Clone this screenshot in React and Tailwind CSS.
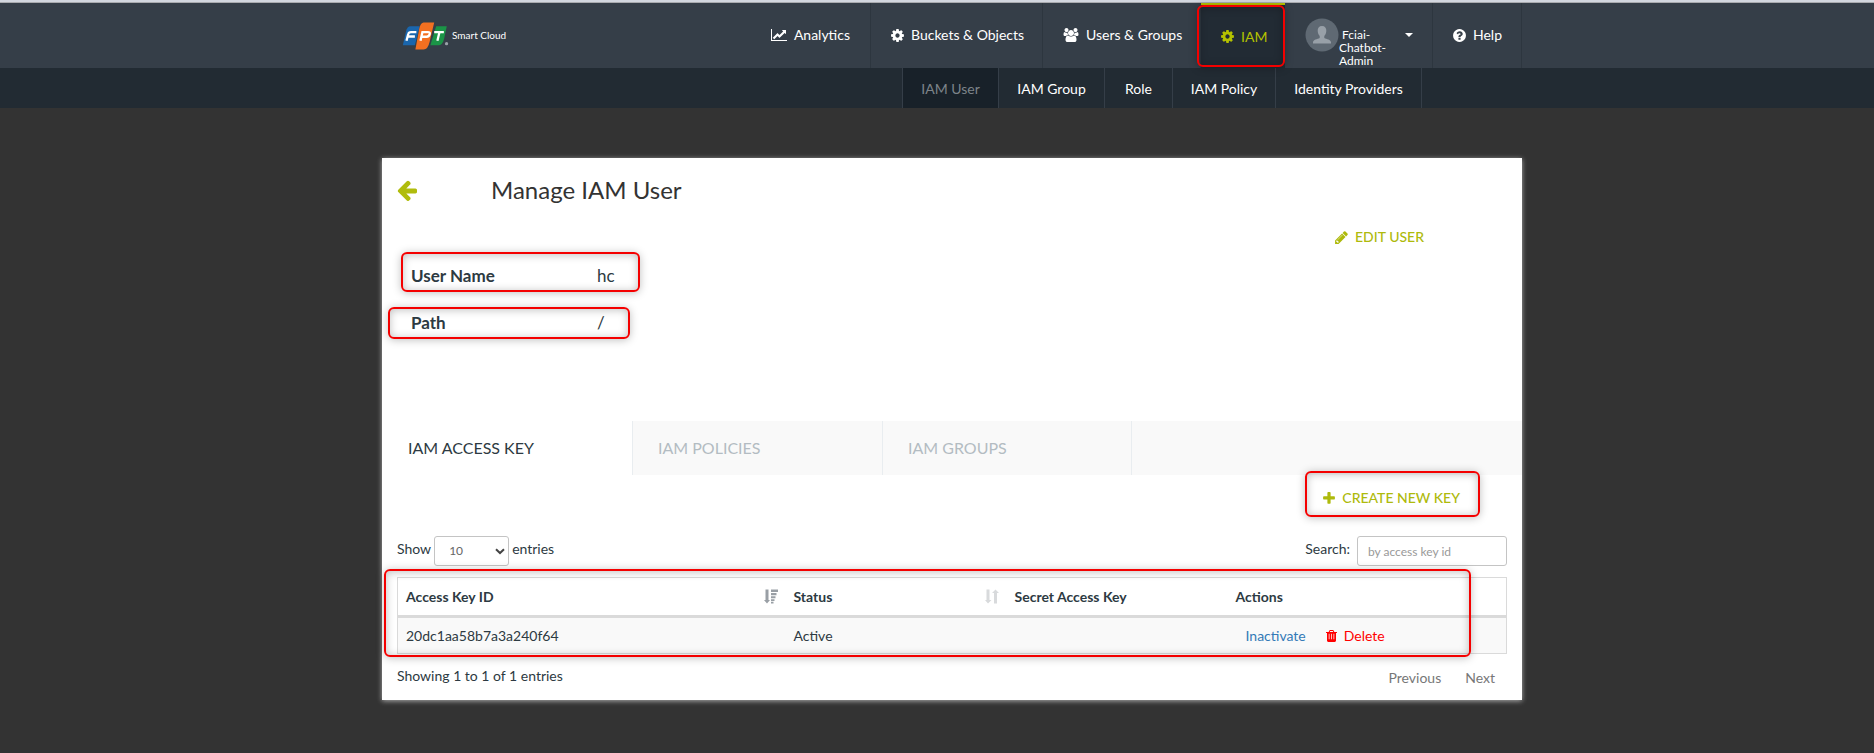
const paths = {
  chart: ["0 0 2048 1792", "M2048 1536v128h-2048v-1536h128v1408h1920zm-128-1248v435q0 21-19.5 29.5t-35.5-7.5l-121-121-633 633q-10 10-23 10t-23-10l-233-233-416 416-192-192 585-585q10-10 23-10t23 10l233 233 464-464-121-121q-16-16-7.500-35.500t29.500-19.500h435q14 0 23 9t9 23z"],
  cog: ["128 0 1536 1792", "M1152 896q0-106-75-181t-181-75-181 75-75 181 75 181 181 75 181-75 75-181zm512-109v222q0 12-8 23t-20 13l-185 28q-19 54-39 91 35 50 107 138 10 12 10 25t-9 23q-27 37-99 108t-94 71q-12 0-26-9l-138-108q-44 23-91 38-16 136-29 186-7 28-36 28h-222q-14 0-24.500-8.500t-11.500-21.500l-28-184q-49-16-90-37l-141 107q-10 9-25 9-14 0-25-11-126-114-165-168-7-10-7-23 0-12 8-23 15-21 51-66.500t54-70.500q-27-50-41-99l-183-27q-13-2-21-12.500t-8-23.500v-222q0-12 8-23t19-13l186-28q14-46 39-92-40-57-107-138-10-12-10-24 0-10 9-23 26-36 98.500-107.500t94.500-71.500q13 0 26 10l138 107q44-23 91-38 16-136 29-186 7-28 36-28h222q14 0 24.500 8.500t11.500 21.500l28 184q49 16 90 37l142-107q9-9 24-9 13 0 25 10 129 119 165 170 7 8 7 22 0 12-8 23-15 21-51 66.500t-54 70.500q26 50 41 98l183 28q13 2 21 12.500t8 23.500z"],
  group: ["-64 0 1920 1792", "M529 896q-162 5-265 128h-134q-82 0-138-40.500t-56-118.500q0-353 124-353 6 0 43.500 21t97.500 42.500 119 21.500q67 0 133-23-5 37-5 66 0 139 81 256zm1071 637q0 120-73 189.500t-194 69.500h-874q-121 0-194-69.500t-73-189.500q0-53 3.500-103.500t14-109 26.500-108.500 43-97.500 62-81 85.500-53.500 111.500-20q10 0 43 21.500t73 48 107 48 135 21.500 135-21.500 107-48 73-48 43-21.500q61 0 111.500 20t85.500 53.500 62 81 43 97.500 26.500 108.500 14 109 3.500 103.500zm-1024-1277q0 106-75 181t-181 75-181-75-75-181 75-181 181-75 181 75 75 181zm704 384q0 159-112.500 271.500t-271.500 112.500-271.500-112.500-112.500-271.500 112.500-271.500 271.500-112.500 271.500 112.500 112.500 271.500zm576 225q0 78-56 118.500t-138 40.500h-134q-103-123-265-128 81-117 81-256 0-29-5-66 66 23 133 23 59 0 119-21.500t97.500-42.500 43.500-21q124 0 124 353zm-128-609q0 106-75 181t-181 75-181-75-75-181 75-181 181-75 181 75 75 181z"],
  help: ["128 0 1536 1792", "M1024 1376v-192q0-14-9-23t-23-9h-192q-14 0-23 9t-9 23v192q0 14 9 23t23 9h192q14 0 23-9t9-23zm256-672q0-88-55.500-163t-138.500-116-170-41q-243 0-371 213-15 24 8 42l132 100q7 6 19 6 16 0 25-12 53-68 86-92 34-24 86-24 48 0 85.500 26t37.500 59q0 38-20 61t-68 45q-63 28-115.500 86.500t-52.500 125.500v36q0 14 9 23t23 9h192q14 0 23-9t9-23q0-19 21.500-49.500t54.500-49.500q32-18 49-28.500t46-35 44.500-48 28-60.500 12.500-81zm384 192q0 209-103 385.500t-279.500 279.500-385.500 103-385.500-103-279.500-279.500-103-385.500 103-385.500 279.500-279.500 385.500-103 385.500 103 279.500 279.500 103 385.500z"],
  pencil: ["128 0 1536 1792", "M491 1536l91-91-235-235-91 91v107h128v128h107zm523-928q0-22-22-22-10 0-17 7l-542 542q-7 7-7 17 0 22 22 22 10 0 17-7l542-542q7-7 7-17zm-54-192l416 416-832 832h-416v-416zm683 96q0 53-37 90l-166 166-416-416 166-165q36-38 90-38 53 0 91 38l235 234q37 39 37 91z"],
  trash: ["192 0 1408 1792", "M640 1312v-704h-96v704zm304 0v-704h-96v704zm304 0v-704h-96v704zM672 384h448l-48-117q-7-9-17-11h-317q-10 2-17 11zm928 32v64q0 14-9 23t-23 9h-96v948q0 83-47 143.500t-113 60.500h-832q-66 0-113-58.500t-47-141.500v-952h-96q-14 0-23-9t-9-23v-64q0-14 9-23t23-9h309l70-167q15-37 54-63t79-26h320q40 0 79 26t54 63l70 167h309q14 0 23 9t9 23z"],
  plus: ["192 0 1408 1792", "M1600 736v192q0 40-28 68t-68 28h-416v416q0 40-28 68t-68 28h-192q-40 0-68-28t-28-68v-416h-416q-40 0-68-28t-28-68v-192q0-40 28-68t68-28h416v-416q0-40 28-68t68-28h192q40 0 68 28t28 68v416h416q40 0 68 28t28 68z"],
  back: ["128 128 1536 1600", "M1664 896v128q0 53-32.500 90.500t-84.500 37.500h-704l293 294q38 36 38 90t-38 90l-75 76q-37 37-90 37-52 0-91-37l-651-652q-37-37-37-90 0-52 37-91l651-650q38-38 91-38 52 0 90 38l75 74q38 38 38 91t-38 91l-293 293h704q52 0 84.500 37.500t32.500 90.500z"],
};

function Icon({ name, className }) {
  const [viewBox, d] = paths[name];
  return (
    <svg viewBox={viewBox} fill="currentColor" fillRule="evenodd" aria-hidden="true" className={`shrink-0 ${className}`}>
      <path d={d} />
    </svg>
  );
}

function Highlight({ className }) {
  return (
    <div
      aria-hidden="true"
      className={`pointer-events-none absolute rounded-md border-2 border-[#f40000] shadow-[0_1px_8px_rgba(0,0,0,0.25),inset_0_1px_8px_rgba(0,0,0,0.25)] ${className}`}
    />
  );
}

function Logo() {
  return (
    <a href="#home" className="flex items-center text-white">
      <svg viewBox="0 0 48 29" className="h-7 w-12" aria-hidden="true">
        <path d="M8 4.500H17.500L12.500 24H0L3.200 10Q4.500 4.500 8 4.500Z" fill="#1a66ad" />
        <path d="M34.500 4.500H45.500L42.700 17.500Q41 24 37 24H28.500Z" fill="#1b9447" />
        <path d="M21.500 0.500H32.500L27.800 20.500Q26 28.500 21.500 28.500H13L17 7Q18.500 0.500 21.500 0.500Z" fill="#f37021" />
        <g fill="none" stroke="#fff" strokeWidth="2.400">
          <path d="M3.800 19.500L5.600 12.500Q6 10.400 8.500 10.400H14M5 15H12.500" />
          <path d="M18.300 19.500L20.300 10.400H26Q28.400 10.400 27.900 12.500Q27.300 15.300 24.600 15.300H19.500" />
          <path d="M32.500 10.400H42.500M38 10.400L35.800 19.500" />
        </g>
        <circle cx="45.300" cy="22.500" r="1.700" fill="#9aa1a8" />
      </svg>
      <span className="ml-[2px] text-[10px]">Smart Cloud</span>
    </a>
  );
}

function SortIcon({ active }) {
  return (
    <svg viewBox="0 0 14 15" className={`h-[15px] w-[14px] ${active ? "text-[#999fa5]" : "text-[#d8dadc]"}`} fill="currentColor" aria-hidden="true">
      <path d={active ? "M1.500 0.500H4.500V11H6L3 14.500L0 11H1.500Z" : "M1.500 0.500H4.500V11H6.500L3 14.500L0 11H1.500Z"} />
      {active ? (
        <path d="M7 0.500H14V3H7ZM7 4H12.500V6.300H7ZM7 7.200H11.500V9.300H7ZM7 10.200H10.500V12H7ZM7 12.800H9.500V14.500H7Z" />
      ) : (
        <path d="M9 14.500H12V4H14L10.500 0.500L7 4H9Z" />
      )}
    </svg>
  );
}

const navItem = "flex items-center border-r border-[#2d363f] pb-px";
const subItem = "flex items-center justify-center border-r border-[#353e48] pt-px";

export default function App() {
  return (
    <div className="min-h-screen bg-[#333333] font-[Lato,sans-serif] text-sm text-[#2d3a42]">
      <div className="h-[3px] border-b border-[#a9abaf] bg-[#d3d7df]" />
      <header className="bg-[#353e48] pl-[30px] text-white">
        <div className="mx-auto flex h-[65px] max-w-[1140px] items-stretch justify-between pl-5">
          <Logo />
          <nav aria-label="Main" className="flex">
            <a href="#analytics" className={`${navItem} gap-[7px] pr-5`}>
              <Icon name="chart" className="h-[14px] w-4" />
              Analytics
            </a>
            <a href="#buckets" className={`${navItem} w-[172px] gap-[7px] pl-5`}>
              <Icon name="cog" className="h-[15px] w-[13px]" />
              Buckets &amp; Objects
            </a>
            <a href="#users" className={`${navItem} w-[158px] gap-[7px] pl-5`}>
              <Icon name="group" className="h-[14px] w-4" />
              Users &amp; Groups
            </a>
            <a href="#iam" aria-current="page" className="relative flex w-[84px] items-center gap-[7px] border-t-2 border-[#b4c100] bg-[#222b34] pl-5 text-[#b4c100]">
              <Icon name="cog" className="h-[15px] w-[13px]" />
              IAM
              <Highlight className="-left-1 top-0 h-[62px] w-[88px]" />
            </a>
            <button type="button" className="flex w-[148px] items-start border-r border-[#2d363f] pl-5 pt-[15px] text-left">
              <svg viewBox="0 0 34 34" className="size-[34px] shrink-0" aria-hidden="true">
                <circle cx="17" cy="17" r="16.500" fill="#5f6973" />
                <path d="M17 8C20 8 21.500 10 21.300 13C21.200 15.300 20.300 17 19.300 18V20C21.500 21.300 26 21.500 26 24.500V25.500H8V24.500C8 21.500 12.500 21.300 14.700 20V18C13.700 17 12.800 15.300 12.700 13C12.500 10 14 8 17 8Z" fill="#98a0a8" />
              </svg>
              <span className="w-[66px] pt-[10px] text-xs leading-[13px]">
                &nbsp;Fciai-
                <br />
                Chatbot-
                <br />
                Admin
              </span>
              <svg viewBox="0 0 8 4" className="mt-[15px] h-1 w-2" aria-hidden="true">
                <path d="M0 0H8L4 4Z" fill="#fff" />
              </svg>
            </button>
            <a href="#help" className={`${navItem} w-[89px] gap-[7px] pl-5`}>
              <Icon name="help" className="h-[15px] w-[13px]" />
              Help
            </a>
          </nav>
        </div>
      </header>
      <div className="bg-[#222b33] pl-[30px] text-white">
        <nav aria-label="IAM" className="mx-auto flex h-10 max-w-[1140px] justify-end pr-[100px]">
          <a href="#iam-user" aria-current="page" className={`${subItem} w-[97px] border-l bg-[#182129] text-[#7d848a]`}>IAM User</a>
          <a href="#iam-group" className={`${subItem} w-[106px]`}>IAM Group</a>
          <a href="#role" className={`${subItem} w-[68px]`}>Role</a>
          <a href="#iam-policy" className={`${subItem} w-[103px]`}>IAM Policy</a>
          <a href="#identity" className={`${subItem} w-[146px]`}>Identity Providers</a>
        </nav>
      </div>

      <div className="pl-[30px] pt-[50px]">
        <main className="mx-auto max-w-[1140px] bg-white pb-3 shadow-[0_1px_5px_rgba(255,255,255,0.6)]">
          <div className="flex items-center pl-[15px] pt-4">
            <a href="#back" aria-label="Back" className="mr-[74px] text-[#b0bc0c]">
              <Icon name="back" className="h-[21px] w-5" />
            </a>
            <h1 className="text-2xl text-[#333]">Manage IAM User</h1>
          </div>
          <div className="mt-[21px] flex justify-end pr-[98px]">
            <button type="button" className="flex items-center gap-[7px] font-medium text-[#aeba0c]">
              <Icon name="pencil" className="h-[15px] w-[13px]" />
              EDIT USER
            </button>
          </div>
          <dl className="pl-[29px] pt-[5px] text-[17px]">
            <div className="relative flex h-[47px] items-center pt-[2px]">
              <dt className="w-[186px] font-bold">User Name</dt>
              <dd>hc</dd>
              <Highlight className="-left-[10px] top-0 h-10 w-[239px]" />
            </div>
            <div className="relative flex h-[47px] items-center pt-[2px]">
              <dt className="w-[186px] font-bold">Path</dt>
              <dd>/</dd>
              <Highlight className="-left-[23px] top-2 h-8 w-[242px]" />
            </div>
          </dl>

          <div role="tablist" className="mt-[75px] flex h-[54px] bg-[#f9f9f9] text-base text-[#b3bcc2]">
            <button type="button" role="tab" aria-selected="true" className="w-[250px] bg-white pl-[26px] text-left text-[#2d3a42]">IAM ACCESS KEY</button>
            <button type="button" role="tab" aria-selected="false" className="w-[250px] border-l border-[#e9edf0] pl-[25px] text-left">IAM POLICIES</button>
            <button type="button" role="tab" aria-selected="false" className="w-[250px] border-x border-[#e9edf0] pl-[25px] text-left">IAM GROUPS</button>
          </div>

          <section className="px-[15px]">
            <div className="flex justify-end pr-[47px] pt-3">
              <button type="button" className="relative flex h-[22px] items-center gap-[7px] font-medium text-[#aeba0c]">
                <Icon name="plus" className="h-[15px] w-3" />
                CREATE NEW KEY
                <Highlight className="-right-5 -top-4 h-[46px] w-[175px]" />
              </button>
            </div>
            <div className="mt-[27px] flex h-[30px] justify-between">
              <label className="flex items-center gap-[3px]">
                <span className="pb-1">Show</span>
                <span className="relative flex">
                  <select defaultValue="10" className="h-[30px] w-[75px] appearance-none rounded-[3px] border border-[#c4c4c4] bg-white pl-[14px] text-xs text-[#666]">
                    <option>10</option>
                    <option>25</option>
                    <option>50</option>
                    <option>100</option>
                  </select>
                  <svg viewBox="0 0 10 7" className="pointer-events-none absolute right-1 top-3 h-[7px] w-[10px]" aria-hidden="true">
                    <path d="M1 1.200L5 5L9 1.200" fill="none" stroke="#444" strokeWidth="2" />
                  </svg>
                </span>
                <span className="pb-1">entries</span>
              </label>
              <label className="flex items-center gap-[7px]">
                <span className="pb-1">Search:</span>
                <input type="text" placeholder="by access key id" className="h-[30px] w-[150px] rounded-[3px] border border-[#c4c4c4] px-[10px] text-xs placeholder:text-[#999]" />
              </label>
            </div>
            <div className="relative mt-[11px]">
              <table className="w-full table-fixed border-collapse border border-[#dadada] text-left">
                <colgroup>
                  <col className="w-[388px]" />
                  <col className="w-[221px]" />
                  <col className="w-[221px]" />
                  <col />
                </colgroup>
                <thead>
                  <tr className="h-[39px] border-b-[3px] border-[#dadada]">
                    <th scope="col" className="px-2 font-bold">
                      <div className="flex items-center justify-between">Access Key ID<SortIcon active /></div>
                    </th>
                    <th scope="col" className="px-2 font-bold">
                      <div className="flex items-center justify-between">Status<SortIcon /></div>
                    </th>
                    <th scope="col" className="px-2 font-bold">Secret Access Key</th>
                    <th scope="col" className="px-2 font-bold">Actions</th>
                  </tr>
                </thead>
                <tbody>
                  <tr className="h-[37px] bg-[#f9f9f9]">
                    <td className="px-2">20dc1aa58b7a3a240f64</td>
                    <td className="px-2">Active</td>
                    <td className="px-2" />
                    <td className="px-2">
                      <div className="flex items-center pl-[10px]">
                        <button type="button" className="mr-5 text-[#337ab7]">Inactivate</button>
                        <button type="button" className="flex items-center gap-[7px] text-[#ff0000]">
                          <Icon name="trash" className="h-[14px] w-[11px]" />
                          Delete
                        </button>
                      </div>
                    </td>
                  </tr>
                </tbody>
              </table>
              <Highlight className="-left-[13px] -top-2 -bottom-[3px] right-9" />
            </div>
            <div className="flex justify-between pt-3">
              <p>Showing 1 to 1 of 1 entries</p>
              <div className="flex gap-6 pr-3 pt-[2px] text-[#777]">
                <button type="button">Previous</button>
                <button type="button">Next</button>
              </div>
            </div>
          </section>
        </main>
      </div>
    </div>
  );
}
